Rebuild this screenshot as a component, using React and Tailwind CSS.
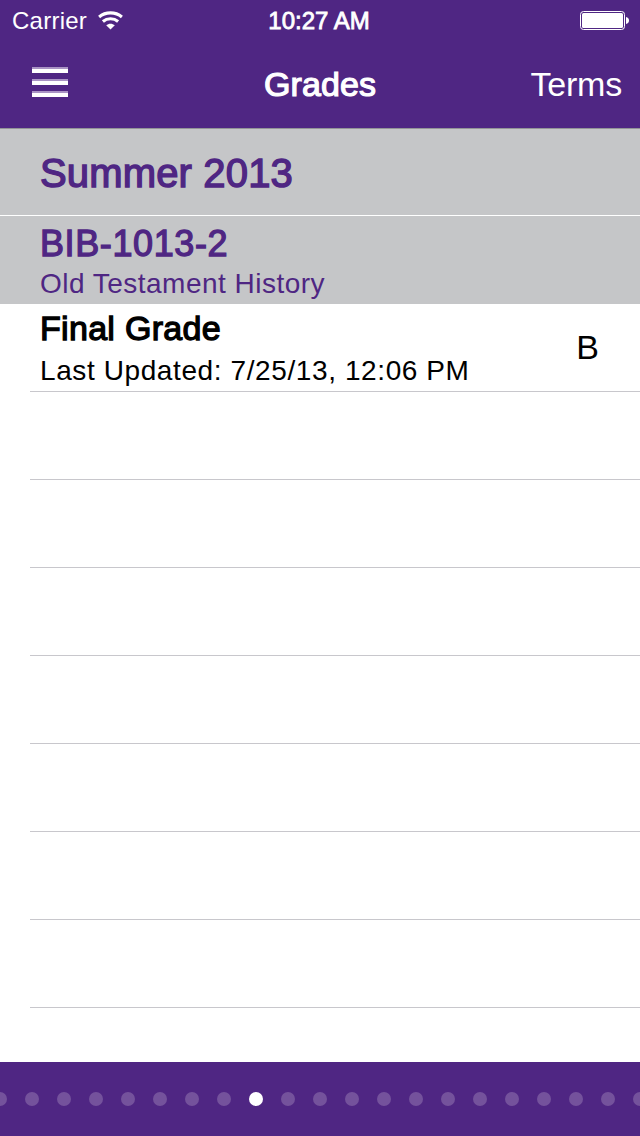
const dots = Array.from({ length: 21 }, (_, i) => i);
const emptyRows = [1, 2, 3, 4, 5, 6, 7];

function WifiIcon() {
  return (
    <svg width="25" height="19" viewBox="0 0 25 19" fill="none" stroke="white">
      <path d="M1.1 6C7.6 0.5 17.4 0.5 23.9 6" strokeWidth="3.1" />
      <path d="M4.9 10.5C9.3 6.8 15.7 6.8 20.1 10.5" strokeWidth="3.1" />
      <path d="M12.5 18.6L8.2 14.3C10.7 12.2 14.3 12.2 16.8 14.3Z" fill="white" stroke="none" />
    </svg>
  );
}

function BatteryIcon() {
  return (
    <svg width="49" height="19" viewBox="0 0 49 19" fill="white">
      <rect x="0.5" y="0.5" width="44" height="18" rx="3" fill="none" stroke="white" />
      <rect x="2" y="2" width="41" height="15" rx="1.5" />
      <path d="M46 6C48 6.5 49 7.6 49 9.5C49 11.4 48 12.5 46 13Z" />
    </svg>
  );
}

function MenuIcon() {
  return (
    <div className="flex flex-col gap-1.5">
      <div className="w-9 h-1.5 bg-white border-t-2 border-[#a993c4]"></div>
      <div className="w-9 h-1.5 bg-white border-t-2 border-[#a993c4]"></div>
      <div className="w-9 h-1.5 bg-white border-t-2 border-[#a993c4]"></div>
    </div>
  );
}

export default function App() {
  return (
    <div className="w-[640px] h-[1136px] flex flex-col overflow-hidden bg-white text-black whitespace-nowrap font-['Liberation_Sans',Arial,sans-serif]">
      <header className="bg-[#4f2683] text-white">
        <div className="h-10 grid grid-cols-3 items-center pl-3 pr-[11px]">
          <div className="flex items-center gap-[11px]">
            <span className="text-2xl leading-[42px] tracking-[0.25px]">Carrier</span>
            <div className="pb-0.5">
              <WifiIcon />
            </div>
          </div>
          <p className="text-2xl leading-[42px] text-center pr-[3px] [-webkit-text-stroke:0.8px_white]">10:27 AM</p>
          <div className="flex justify-end pb-px">
            <BatteryIcon />
          </div>
        </div>
        <div className="h-22 grid grid-cols-[1fr_auto_1fr] items-center pl-8 pr-[18px]">
          <button className="w-9 pb-1">
            <MenuIcon />
          </button>
          <h1 className="text-[34px] leading-[88px] text-center pr-3.5 tracking-[0.1px] [-webkit-text-stroke:1.2px_white]">Grades</h1>
          <button className="text-[34px] leading-[88px] text-right tracking-[-0.2px]">Terms</button>
        </div>
      </header>

      <main className="flex-1">
        <div className="h-22 pl-10 bg-[#c5c6c8] border-t border-t-[#939497] border-b border-b-white text-[#4f2683]">
          <h2 className="text-[40px] leading-[88px] tracking-[0.16px] [-webkit-text-stroke:1.4px_#4f2683]">Summer 2013</h2>
        </div>
        <div className="h-22 pl-10 pt-2 bg-[#c5c6c8] text-[#4f2683]">
          <h3 className="text-4xl leading-10 tracking-[0.6px] [-webkit-text-stroke:1.3px_#4f2683]">BIB-1013-2</h3>
          <p className="text-[28px] leading-10 tracking-[0.48px]">Old Testament History</p>
        </div>
        <div className="ml-[30px] h-22 pl-2.5 pr-[41px] flex justify-between border-b border-[#c8c7cc]">
          <div className="flex flex-col gap-[3px] pt-1">
            <p className="text-[34px] leading-10 tracking-[0.3px] [-webkit-text-stroke:1.3px_black]">Final Grade</p>
            <p className="text-[28px] leading-10 tracking-[0.6px]">Last Updated: 7/25/13, 12:06 PM</p>
          </div>
          <span className="text-[34px] leading-[87px]">B</span>
        </div>
        {emptyRows.map((row) => (
          <div key={row} className="ml-[30px] h-22 border-b border-[#c8c7cc]"></div>
        ))}
      </main>

      <footer className="h-[74px] bg-[#4f2683] flex items-center justify-center gap-[18px]">
        {dots.map((dot) => (
          <div
            key={dot}
            className={`w-3.5 h-3.5 shrink-0 rounded-full ${dot === 8 ? "bg-white" : "bg-[#74529c]"}`}
          ></div>
        ))}
      </footer>
    </div>
  );
}
